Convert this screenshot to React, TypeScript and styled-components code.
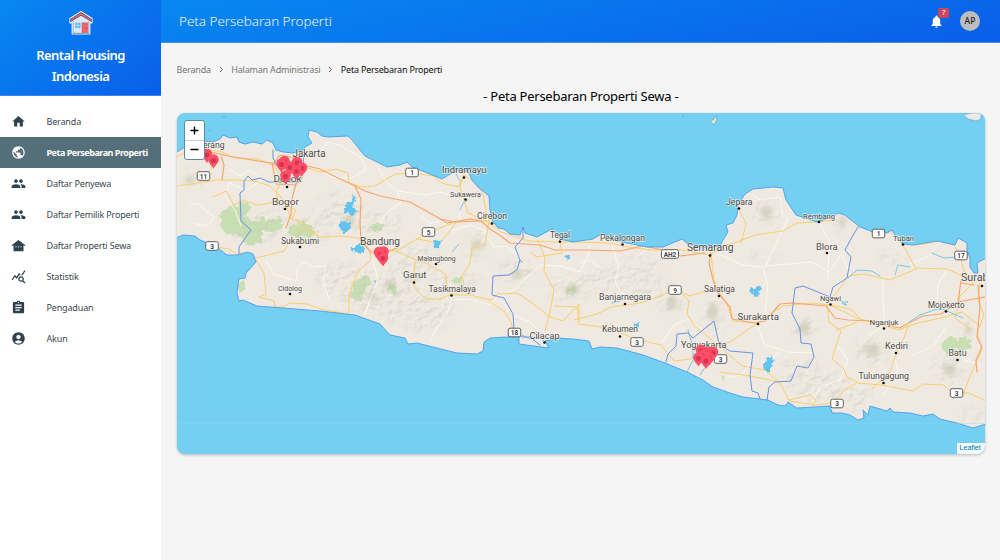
import React from 'react';
import styled, { createGlobalStyle } from 'styled-components';
import {
  MdHome, MdPublic, MdPeople, MdOtherHouses, MdQueryStats, MdAssignment, MdAccountCircle, MdNotifications,
} from 'react-icons/md';

const Global = createGlobalStyle`
  * { box-sizing: border-box; }
  body { margin: 0; background: #f5f5f5; font-family: "Noto Sans", "Open Sans", sans-serif; }
`;

const Page = styled.div`display: flex; height: 560px; width: 1000px; overflow: hidden;`;
const Sidebar = styled.aside`
  width: 161px; flex: none; background: #fff; display: flex; flex-direction: column;
`;
const Brand = styled.div`
  height: 96px; padding-top: 10px; display: flex; flex-direction: column; align-items: center;
  background: linear-gradient(140deg, #0788f1 0%, #0a5ee9 100%);
  border-bottom: 1px solid #3f83ee;
`;
const BrandName = styled.h1`
  margin: 9px 0 0; color: #fff; font-size: 13px; line-height: 21px; font-weight: 600;
  text-align: center; letter-spacing: -0.6px; width: 110px;
`;
const Menu = styled.nav`padding-top: 10px; display: flex; flex-direction: column;`;
const Item = styled.a<{ $active?: boolean }>`
  height: 30.95px; display: flex; align-items: center; padding-left: 11px; gap: 20.5px;
  font-size: 9px; letter-spacing: ${p => (p.$active ? '-0.48px' : '-0.16px')};
  white-space: nowrap;
  color: ${p => (p.$active ? '#fff' : '#37474f')};
  font-weight: ${p => (p.$active ? 700 : 400)};
  background: ${p => (p.$active ? '#546e7a' : 'transparent')};
  svg { width: 15px; height: 15px; flex: none; color: ${p => (p.$active ? '#fff' : '#2f434e')}; }
`;
const Main = styled.main`flex: 1; min-width: 0; display: flex; flex-direction: column;`;
const TopBar = styled.header`
  height: 43px; padding: 0 20px 0 18px; display: flex; align-items: center;
  background: linear-gradient(168deg, #0788f1 0%, #0a5ee9 100%);
  border-bottom: 1px solid #4a8df0;
`;
const TopTitle = styled.h2`
  flex: 1; margin: 0 0 1px; color: #eef5fe; font-size: 13.5px; font-weight: 300; letter-spacing: -0.05px;
`;
const Bell = styled.div`
  position: relative; display: flex; color: #fff; margin-right: 16px;
  svg { width: 15px; height: 15px; }
`;
const Badge = styled.span`
  position: absolute; left: 9px; top: -6px; width: 11px; height: 10px; border-radius: 2px;
  background: #c8475c; color: #fff; font-size: 7px; line-height: 10px; text-align: center;
`;
const Avatar = styled.div`
  width: 20px; height: 20px; border-radius: 50%; background: #bdbdbd; color: #212121;
  font-size: 8.5px; font-weight: 500; line-height: 20px; text-align: center;
`;
const Content = styled.section`padding: 19px 15px 0 15.6px; display: flex; flex-direction: column;`;
const Crumbs = styled.div`
  display: flex; align-items: center; height: 16px; margin-top: -1px;
  font-size: 9px; letter-spacing: -0.2px; color: #757575;
  svg { margin: 1px 7.7px 0; }
`;
const Current = styled.span`color: #111;`;
const MapTitle = styled.h3`
  margin: 10px 0 8px; height: 18px; line-height: 18px; font-size: 13px; font-weight: 400;
  color: #000; text-align: center; letter-spacing: -0.26px;
`;
const MapCard = styled.div`
  position: relative; height: 341px; width: 808px; border-radius: 8px; overflow: hidden;
  background: #75cff0; box-shadow: 0 1px 3px rgba(0,0,0,.25);
  > svg { display: block; }
`;
const ZoomControl = styled.div`
  position: absolute; left: 7px; top: 7px; width: 21px; height: 40px; border-radius: 3px;
  border: 1px solid #5d8c97; background: #fff; display: flex; flex-direction: column;
`;
const ZoomButton = styled.button`
  flex: 1; border: 0; padding: 0; background: none; display: flex; align-items: center; justify-content: center;
  & + & { border-top: 1px solid #ccc; }
`;
const Attribution = styled.div`
  position: absolute; right: 0; bottom: 0; width: 28px; height: 11px; background: rgba(255,255,255,.9);
  color: #0078a8; font: 7px/10px "Liberation Sans", sans-serif; padding-left: 3px;
`;

const Logo = () => (
  <svg width="28" height="26" viewBox="0 0 28 26">
    <path d="M14 1.5 25 8.6v4.2h-2.2V24H5.2V12.8H3V8.6Z" fill="#eef5fb" stroke="#eef5fb" strokeWidth="1.2" strokeLinejoin="round" />
    <path d="M6 11.5 14 6l8 5.5V23H6Z" fill="#d9e8f2" />
    <path d="M3.6 11.6V9.2L14 2.5l10.4 6.7v2.4L14 5.3Z" fill="#e0606c" stroke="#4a4a62" strokeWidth=".8" />
    <path d="M6.2 11v12.3h15.6V11" fill="none" stroke="#7c92ab" strokeWidth=".6" />
    <path d="M8.3 12.8h5.2v5.2H8.3Z" fill="#54b4f2" />
    <path d="M10.9 12.8v5.2M8.3 15.4h5.2" stroke="#e9f5fc" strokeWidth=".6" />
    <path d="M15 12.8h5.8v9.8H15Z" fill="#f4606c" stroke="#b24a5c" strokeWidth=".4" />
    <circle cx="19.2" cy="18" r=".6" fill="#54304a" />
    <path d="M5.5 23.4h17" stroke="#7f8fa8" strokeWidth=".7" />
  </svg>
);

const Chevron = () => (
  <svg width="5" height="7" viewBox="0 0 5 7"><path d="m1 1 2.5 2.5L1 6" fill="none" stroke="#666" strokeWidth="1" /></svg>
);

const NORTH =
  'M177 152 190 144 198 140 205 141 213 142 220 139 223 135 230 138 237 137 239 142 245 144 253 142 262 144 267 140 273 143 276 150 283 152 293 153 303 150 305 147 312 143 308 137 309 130 317 132 322 136 328 137 348 136 353 141 360 150 365 156 377 162 387 167 400 165 407 162 412 167 425 172 442 179 452 173 462 169 469 173 472 180 478 187 489 196 490 210 492 220 498 228 504 229 510 234 520 235 523 227 525 233 537 237 552 229 560 239 573 242 593 239 603 233 613 240 627 243 647 247 663 247 682 239 688 244 707 248 720 246 723 240 728 232 726 225 733 223 737 215 738 205 745 194 753 189 773 187 783 188 786 200 796 215 817 222 832 217 838 213 845 215 860 227 873 232 887 233 892 230 895 235 903 244 913 245 937 241 955 245 958 238 967 243 967 250 970 258 970 267 974 273 978 273 977 263 986 258';
const SOUTH =
  '986 424 973 428 957 423 940 419 933 414 923 416 910 413 893 412 890 408 887 411 870 406 868 415 863 410 864 418 858 420 850 415 842 413 832 413 830 406 813 407 797 408 788 402 785 406 778 405 768 400 743 397 730 393 713 387 703 380 687 372 665 363 643 355 617 348 600 347 592 349 589 341 573 339 557 338 545 341 549 348 519 344 519 337 507 337 490 338 484 342 483 351 477 354 457 353 433 347 417 343 408 344 405 338 390 335 380 324 355 315 320 311 283 308 257 306 243 300 239 301 237 293 239 279 245 278 246 273 256 262 253 254 248 252 237 255 227 255 218 248 210 244 200 240 195 236 183 235 176 238';

const HILLS: [number, number, number, number][] = [
  [196, 178, 13, 8], [255, 226, 32, 16], [308, 230, 22, 14], [340, 212, 26, 18], [378, 224, 22, 14],
  [345, 280, 30, 16], [368, 300, 25, 16], [398, 292, 28, 20], [420, 312, 34, 18], [415, 262, 26, 15],
  [476, 245, 12, 14], [458, 284, 24, 12], [516, 272, 18, 12], [572, 288, 24, 12], [620, 279, 36, 12],
  [655, 290, 24, 10], [672, 303, 12, 12], [714, 318, 9, 18], [766, 212, 12, 12], [766, 257, 18, 4],
  [842, 224, 7, 10], [804, 328, 12, 12], [800, 372, 22, 12], [822, 386, 30, 14], [850, 398, 22, 12],
  [872, 350, 18, 14], [950, 368, 17, 14], [968, 330, 8, 10], [975, 415, 12, 8], [892, 258, 16, 4], [640, 265, 20, 8],
];
const PEAKS: [number, number, number, number][] = [
  [766, 212, 5, 7], [672, 303, 5, 7], [713, 312, 5, 9], [804, 328, 5, 7], [572, 290, 8, 4], [476, 245, 4, 6],
  [872, 350, 8, 6], [950, 370, 6, 6], [842, 222, 3, 6], [390, 285, 6, 5], [349, 221, 6, 6], [517, 274, 6, 4],
  [190, 180, 6, 3], [968, 330, 3, 4], [372, 297, 5, 5],
];
const FORESTS = [
  'M220 213 232 205 246 203 252 208 244 217 254 222 263 218 272 222 279 216 283 226 277 232 262 232 262 243 249 246 238 236 222 231Z',
  'M288 229 300 221 312 226 315 235 305 239 288 234Z',
  'M370 227 376 221 384 224 383 230 372 231Z',
  'M353 285 361 275 370 277 371 286 363 291 365 299 356 302 350 296Z',
  'M389 284 395 281 398 292 394 298 389 292Z',
  'M237 286 243 279 246 290 240 295Z',
  'M452 279 460 277 463 283 454 285Z',
  'M942 343 950 337 958 339 964 336 972 341 968 351 957 350 951 355 946 352 941 349Z',
  'M566 290 574 285 575 291 567 295Z',
  'M720 376 724 374 724 379Z',
];
const LAKES = [
  'M345 204 352 200 353 193 355 201 352 207 357 211 352 216 345 212Z',
  'M338 224 344 221 351 223 349 230 343 234Z',
  'M350 249 359 244 366 248 361 254Z',
  'M433 240 441 241 439 248 435 249Z',
  'M750 289 761 286 760 292 757 297 752 293Z',
  'M765 361 772 355 773 365 768 373 763 368Z',
  'M633 324 640 322 638 328Z',
  'M843 302 848 303 844 306Z',
  'M950 395 956 394 954 399Z',
  'M565 256 570 256 568 259Z',
  'M518 260 523 260 521 263Z',
  'M373 280 376 279 376 283Z',
];
const MINOR = [
  'M190 206 198 203 208 213 215 217 207 226 193 223',
  'M230 170 240 176 251 170 262 180 246 190 229 183 225 196 235 210 241 226',
  'M320 153 327 142 340 145 349 151 361 157 366 170 351 178 330 177 321 168',
  'M377 165 386 182 397 191 401 203 388 211 380 223',
  'M397 191 425 195 440 192 462 199 459 219',
  'M266 261 274 274 296 281 298 266 306 262 312 267 326 266 323 281 329 300',
  'M373 260 378 280 370 300 365 315',
  'M420 216 430 223 442 221 452 231 470 225 488 232',
  'M452 295 447 315 437 327 430 341',
  'M484 231 494 247 507 246 521 258',
  'M453 300 470 299 490 305 498 296 516 289 526 278 540 265 560 266 580 272 588 256 590 245',
  'M500 300 514 315 531 323 539 331',
  'M612 245 619 268 615 282 626 300',
  'M710 250 742 265 763 267 768 286 765 314 758 317',
  'M766 266 775 246 788 218',
  'M765 266 812 262 829 272 842 254 850 275 836 284',
  'M819 222 829 241 828 278',
  'M753 194 759 200 780 197 783 217',
  'M757 325 765 345 789 352 813 353',
  'M755 354 742 375 725 378',
  'M765 373 771 358 780 352',
  'M883 280 883 295 884 318 878 330 866 337',
  'M948 268 938 284 937 304 947 313',
  'M910 264 929 256 940 242',
  'M893 352 898 370 888 387 884 395',
  'M813 402 820 387 840 380 848 360 838 347',
  'M946 327 934 345 925 350 911 356',
  'M980 365 965 360 956 348 948 355',
  'M637 257 650 246M604 270 590 260 580 263',
  'M662 343 674 325 688 319 702 330',
];
const MAJOR = [
  'M177 186 198 183 217 180 240 180 255 181 270 186 280 196 286 205 291 219 302 222 320 237 340 236 359 238 371 251',
  'M177 157 190 150 210 150 222 152 235 158 258 159 274 166 283 178 276 193 280 205',
  'M200 181 211 169 213 157 208 151',
  'M213 197 226 191 234 205 244 200 256 205 266 204 279 201',
  'M286 205 296 210 292 219',
  'M305 167 320 172 336 169 348 173 349 183 363 187 375 186 395 174 413 173 433 176 442 183 458 187 464 175 477 184 483 194 486 211 490 224 501 232 529 241 555 242 579 242 610 243 628 247 651 250 681 250 710 255 720 249',
  'M200 242 210 246 229 249 237 254 248 252 256 258 284 251 291 239 299 227 319 237',
  'M256 260 264 273 266 294 259 297 274 301 275 307 283 307 290 303 307 304 320 309 348 314',
  'M371 251 370 261 358 271 353 285 349 294 349 313',
  'M372 252 396 251 417 239 435 230 455 222 470 219 489 222 485 245 472 248 470 263 462 276 464 284',
  'M417 239 440 243 456 223M396 251 414 259 428 264 446 275 447 288 453 295 470 295 491 300 498 294 517 293 535 305 550 317 563 321 579 304 579 324 610 328 635 339 661 345 674 361 690 359 709 350',
  'M415 261 414 287 426 299 441 299 453 293',
  'M464 175 460 187 468 213 489 222',
  'M489 301 505 312 511 322 514 334',
  'M538 241 545 257 544 271 554 290 550 312 545 331',
  'M531 253 537 257 562 253 560 243M554 306 577 307 579 321',
  'M574 320 597 314 611 307 640 303 656 298 669 292 681 292 689 301 687 314 694 325 706 335 718 345 742 366 765 370 780 383 789 401 816 405 831 403 847 388 857 383 882 385 913 391 923 384 944 385 950 391 969 393 986 401',
  'M681 292 690 296 706 291 711 290',
  'M711 254 714 280 718 291 726 302 733 321 756 323 783 306 810 303 830 305 857 318 873 323 899 330 914 324 945 317 962 312 980 326',
  'M720 247 737 242 755 235 783 231 797 223 818 222 832 220M738 207 746 224 741 243',
  'M858 226 874 230 890 232 902 244 917 245 939 241 954 245 960 255 964 271 975 282',
  'M903 245 916 269 890 280 864 274 848 276 838 291 827 303 829 322 841 331 832 359 844 369 847 377 857 382',
  'M916 268 948 269 973 282',
  'M830 305 850 309 862 320 879 322',
  'M899 330 908 326 904 338 897 352 889 373 872 389M836 330 850 325 857 322',
  'M973 283 960 296 955 318 972 330M980 283 978 300 984 315 977 333 982 350 970 376 963 395',
  'M789 400 810 395 816 400 812 406M720 372 750 376 780 382',
  'M756 324 742 334 730 342 717 346',
];
const HIGHWAYS = [
  'M211 152 228 156 252 160 272 163 281 168 303 165 320 169 338 178 355 186 365 191 380 196 410 202 430 213 447 223 470 219 481 221 490 229 501 236 510 243 540 245 555 250 588 250 620 251 643 246 663 250 680 256 705 253',
  'M355 186 361 199 360 223 361 240 371 253',
  'M272 163 276 184 295 185 302 178 301 159 280 155 274 163M284 156 294 172 302 177M297 180 292 199 291 214 286 228',
  'M711 253 709 263 713 280 719 294 730 307 732 319 755 323 765 321 780 304 792 303 826 306 835 318 848 320 871 321 899 328 923 316 941 314 957 302 986 297',
  'M222 180 224 165 221 156M373 253 386 252 397 248',
  'M440 219 455 222 481 221',
  'M961 281 958 302M978 285 980 307 977 337 982 347 976 360 977 372M961 283 974 285',
];
const BORDERS = [
  'M239 253 239 247 251 230 241 221 240 193 244 190 244 181 248 176 252 180 260 178 269 182 299 182 302 171 304 155M276 164 273 158 273 150',
  'M523 228 523 238 515 247 520 260 517 270 509 275 493 276 492 295 504 298 513 314 514 331 522 337 530 337 540 345',
  'M666 362 668 354 676 346 677 334 688 333 693 338 714 321 719 344 730 351 753 353 750 375 752 391 758 393 760 399',
  'M767 400 769 387 775 382 791 381 797 366 808 368 814 357 811 344 801 343 800 329 792 313 795 288 803 286 830 297 833 287 847 278 851 257 845 250 852 237 858 227',
];
const RIVERS = [
  'M522 335 530 339 540 337 546 343M460 210 463 203 468 200M456 174 460 181',
  'M848 278 857 270 872 271 880 276M895 275 898 265 910 267M932 253 944 258 958 257M909 322 920 315 940 308 963 318',
  'M688 330 693 347 693 360 687 372M700 375 704 369M452 252 459 244M612 303 620 301',
];

type City = [string, number, number, number, number, number?, number?];
const CITIES: City[] = [
  ['erang', 203, 148, 21.5, 9], ['Jakarta', 292.5, 156.5, 33, 10], ['Depok', 273.5, 182, 28, 9.5, 287, 187],
  ['Bogor', 272, 204.5, 27, 9.5, 285, 209], ['Sukabumi', 281, 243.5, 38, 8.5, 300, 247],
  ['Cidolog', 278, 291, 24, 7, 290, 294], ['Bandung', 360, 244.5, 40, 10],
  ['Malangbong', 417.5, 261, 38, 7, 436, 264], ['Garut', 403, 278, 23.5, 9, 414, 282.5],
  ['Tasikmalaya', 428.5, 291.5, 47.5, 9, 451.5, 295.5], ['Indramayu', 442, 173, 44.5, 9, 464, 177.5],
  ['Sukawera', 450, 196.5, 31, 7, 465.5, 199.5], ['Cirebon', 477, 219, 30, 8.5, 492, 223.5],
  ['Tegal', 550, 237.5, 20, 8.5, 560, 241.5], ['Pekalongan', 600, 240.5, 45, 8.5, 622.5, 244.5],
  ['Semarang', 687, 251, 46.5, 10, 710, 255.5], ['Salatiga', 704, 292, 31, 8.5, 719, 296],
  ['Banjarnegara', 599, 300, 52, 8.5, 625, 304], ['Kebumen', 602, 332, 36, 8.5, 620, 336.5],
  ['Cilacap', 529.5, 338.5, 30, 8.5, 544.5, 342.5], ['Yogyakarta', 681, 347.5, 45.5, 9],
  ['Jepara', 726, 205, 26.5, 8.5, 739, 208.5], ['Rembang', 803, 218.5, 32, 7.5, 819, 222],
  ['Blora', 816, 249.5, 21.5, 8.5, 827, 253], ['Tuban', 893, 241, 21, 7.5, 903, 244.5],
  ['Surakarta', 737.5, 320, 41.5, 9, 758, 324], ['Ngawi', 820, 301, 21, 7.5, 830.5, 304.5],
  ['Nganjuk', 869.5, 325, 29, 7.5, 884, 328.5], ['Mojokerto', 928, 307.5, 36.5, 8.5, 946, 311.5],
  ['Surabaya', 961, 281, 44, 10, 982, 286], ['Kediri', 885, 348.5, 23, 8.5, 896, 353],
  ['Batu', 948.5, 356, 18, 8.5, 957.5, 360], ['Tulungagung', 858.5, 379, 50.5, 8.5, 883.5, 383],
];
const SHIELDS: [string, number, number][] = [
  ['11', 203.5, 176], ['1', 412, 172.5], ['5', 428.5, 232], ['3', 212, 246], ['AH2', 670, 254], ['9', 675, 290],
  ['18', 514.5, 332.5], ['3', 637, 342], ['3', 720.5, 359], ['1', 878.5, 233.5], ['17', 961, 255.5],
  ['3', 837, 403.5], ['3', 956.5, 393],
];
const PINS: [number, number][] = [
  [207, 163], [213.5, 168.5], [284.5, 170], [297, 171], [281.5, 172.5], [302, 176.5], [290, 175.5], [296.5, 179.5], [285.5, 184.5],
  [379, 261], [383.5, 260.5], [380, 262.5], [383, 266.5],
  [701, 359], [708, 361], [713, 361], [703, 364], [709, 366], [698.5, 366.5], [706, 369],
];

const Pin = ({ x, y }: { x: number; y: number }) => (
  <g transform={`translate(${x} ${y})`}>
    <path d="M0 0C-1.6-3-5.3-5.6-5.3-9a5.3 5.3 0 0 1 10.6 0C5.3-5.6 1.6-3 0 0Z" fill="#fb4f67" />
    <circle cy="-8" r="2.5" fill="#d93350" />
  </g>
);

const lines = (paths: string[], stroke: string, width: number) => (
  <g fill="none" stroke={stroke} strokeWidth={width} strokeLinejoin="round" strokeLinecap="round">
    {paths.map(d => <path key={d} d={d} />)}
  </g>
);

const JavaMap = () => (
  <svg width="808" height="341" viewBox="177 113 808 341">
    <defs>
      <clipPath id="land"><path d={`${NORTH} ${SOUTH}Z`} /></clipPath>
      <filter id="relief" x="-20%" y="-20%" width="140%" height="140%">
        <feGaussianBlur in="SourceGraphic" stdDeviation="4.5" result="area" />
        <feTurbulence type="fractalNoise" baseFrequency=".11 .14" numOctaves="4" seed="4" result="noise" />
        <feDiffuseLighting in="noise" surfaceScale="3.2" lightingColor="#ffffff" result="lit">
          <feDistantLight azimuth="225" elevation="50" />
        </feDiffuseLighting>
        <feColorMatrix in="lit" values="0 0 0 0 .58  0 0 0 0 .57  0 0 0 0 .47  -2.2 0 0 0 1.75" result="shade" />
        <feComposite in="shade" in2="area" operator="in" result="clip" />
        <feGaussianBlur in="clip" stdDeviation=".5" />
      </filter>
      <filter id="rough">
        <feTurbulence type="fractalNoise" baseFrequency=".2" numOctaves="2" seed="7" result="n" />
        <feDisplacementMap in="SourceGraphic" in2="n" scale="8" xChannelSelector="R" yChannelSelector="G" result="d" />
        <feGaussianBlur in="d" stdDeviation=".6" />
      </filter>
      <filter id="ragged">
        <feTurbulence type="fractalNoise" baseFrequency=".3" numOctaves="2" seed="3" result="n" />
        <feDisplacementMap in="SourceGraphic" in2="n" scale="6" xChannelSelector="R" yChannelSelector="G" />
      </filter>
      <filter id="soft" x="-50%" y="-50%" width="200%" height="200%"><feGaussianBlur stdDeviation="2" /></filter>
    </defs>
    <path d={`${NORTH} ${SOUTH}Z`} fill="#efe9e1" />
    <g clipPath="url(#land)">
      <g filter="url(#rough)" fill="#c6dfb2" opacity=".95">{FORESTS.map(d => <path key={d} d={d} />)}</g>
      <g filter="url(#soft)" fill="#b9b89c" opacity=".45">
        {PEAKS.map(([x, y, rx, ry]) => <ellipse key={`${x}-${y}`} cx={x} cy={y} rx={rx} ry={ry} />)}
      </g>
      <g filter="url(#relief)" opacity=".42">
        {HILLS.map(([x, y, rx, ry]) => <ellipse key={`${x}-${y}`} cx={x} cy={y} rx={rx} ry={ry} fill="#000" />)}
      </g>
      {lines(MINOR, '#fbf9f5', 0.9)}
      {lines(MAJOR, '#f7d06c', 1)}
      {lines(HIGHWAYS, '#f9a56c', 1.2)}
    </g>
    <g fill="#62c4ee" filter="url(#ragged)">{LAKES.map(d => <path key={d} d={d} />)}</g>
    {lines(RIVERS, '#76c8ea', 1)}
    {lines([NORTH, `M${SOUTH}`], '#4b9df0', 0.9)}
    {lines(BORDERS, '#6495e3', 1)}
    <g fill="#dbe7c4" stroke="#4b9df0" strokeWidth=".6">
      <path d="m710 121 4-2 2-4 1 5-3 5Z" />
      <path d="m963 115 8-2h10v6l-5 2-8-2Z" fill="#efe9e1" />
      <path d="m682 116 2 1M222 117h4M209 130l2 1" />
    </g>
    <path d="M176 423.5H986" stroke="#8bd7f2" strokeWidth=".6" opacity=".6" />
    {SHIELDS.map(([label, x, y]) => {
      const w = label.length > 2 ? 17 : 12.5;
      return (
        <g key={`${x}-${y}`}>
          <rect x={x - w / 2} y={y - 4.3} width={w} height="8.6" rx="1.8" fill="#fff" stroke="#606060" strokeWidth="1" />
          <text x={x} y={y + 2.5} textAnchor="middle" fontFamily="Roboto, sans-serif" fontWeight="700" fontSize="6.5" fill="#444">{label}</text>
        </g>
      );
    })}
    {CITIES.map(([name, x, y, w, size, dx, dy]) => (
      <g key={name}>
        {dx !== undefined && <circle cx={dx} cy={dy} r="1.3" fill="#111" />}
        <text x={x} y={y} textLength={w} lengthAdjust="spacingAndGlyphs" fontFamily="Roboto, sans-serif" fontSize={size}
          fill="#4c4c4c" stroke="#f7f4ef" strokeWidth="1.4" strokeOpacity=".75" paintOrder="stroke">{name}</text>
      </g>
    ))}
    {PINS.map(([x, y]) => <Pin key={`${x}-${y}`} x={x} y={y} />)}
  </svg>
);

const MENU = [
  { label: 'Beranda', icon: MdHome },
  { label: 'Peta Persebaran Properti', icon: MdPublic, active: true },
  { label: 'Daftar Penyewa', icon: MdPeople },
  { label: 'Daftar Pemilik Properti', icon: MdPeople },
  { label: 'Daftar Properti Sewa', icon: MdOtherHouses },
  { label: 'Statistik', icon: MdQueryStats },
  { label: 'Pengaduan', icon: MdAssignment },
  { label: 'Akun', icon: MdAccountCircle },
];

export default function App() {
  return (
    <Page>
      <Global />
      <Sidebar>
        <Brand>
          <Logo />
          <BrandName>Rental Housing Indonesia</BrandName>
        </Brand>
        <Menu>
          {MENU.map(({ label, icon: Icon, active }) => (
            <Item key={label} $active={active}><Icon /><span>{label}</span></Item>
          ))}
        </Menu>
      </Sidebar>
      <Main>
        <TopBar>
          <TopTitle>Peta Persebaran Properti</TopTitle>
          <Bell><MdNotifications /><Badge>7</Badge></Bell>
          <Avatar>AP</Avatar>
        </TopBar>
        <Content>
          <Crumbs>
            <span>Beranda</span><Chevron /><span>Halaman Administrasi</span><Chevron /><Current>Peta Persebaran Properti</Current>
          </Crumbs>
          <MapTitle>- Peta Persebaran Properti Sewa -</MapTitle>
          <MapCard>
            <JavaMap />
            <ZoomControl>
              <ZoomButton aria-label="Zoom in"><svg width="9" height="9"><path d="M4.5 .5v8M.5 4.5h8" stroke="#000" strokeWidth="1.4" /></svg></ZoomButton>
              <ZoomButton aria-label="Zoom out"><svg width="9" height="9"><path d="M.5 4.5h8" stroke="#000" strokeWidth="1.4" /></svg></ZoomButton>
            </ZoomControl>
            <Attribution>Leaflet</Attribution>
          </MapCard>
        </Content>
      </Main>
    </Page>
  );
}
